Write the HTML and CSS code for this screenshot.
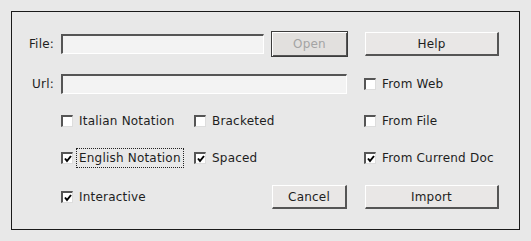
FILE: index.html
```html
<!DOCTYPE html>
<html lang="en">
    <head>
        <meta charset="UTF-8">
        <link rel="stylesheet" href="styles.css">
        <title>Import</title>
    </head>
    <body>
        <div id="dialog">
            <span class="label">File:</span>
            <div class="field" id="file-field"></div>
            <button class="button" id="open" disabled>Open</button>
            <button class="button" id="help">Help</button>

            <span class="label">Url:</span>
            <div class="field" id="url-field"></div>
            <label class="check"><span class="box"></span><span class="text">From Web</span></label>

            <label class="check col2"><span class="box"></span><span class="text">Italian Notation</span></label>
            <label class="check"><span class="box"></span><span class="text">Bracketed</span></label>
            <label class="check col5"><span class="box"></span><span class="text">From File</span></label>

            <label class="check col2"><span class="box checked"><svg viewBox="0 0 8 8"><path d="M1 3.5 L3 6 L7 1" /></svg></span><span class="text focus">English Notation</span></label>
            <label class="check"><span class="box checked"><svg viewBox="0 0 8 8"><path d="M1 3.5 L3 6 L7 1" /></svg></span><span class="text">Spaced</span></label>
            <label class="check col5"><span class="box checked"><svg viewBox="0 0 8 8"><path d="M1 3.5 L3 6 L7 1" /></svg></span><span class="text">From Currend Doc</span></label>

            <label class="check col2"><span class="box checked"><svg viewBox="0 0 8 8"><path d="M1 3.5 L3 6 L7 1" /></svg></span><span class="text">Interactive</span></label>
            <button class="button col4" id="cancel">Cancel</button>
            <button class="button" id="import">Import</button>
        </div>
    </body>
</html>
```
FILE: styles.css
```css
html, body {
    margin: 0;
    background-color: #e8e8e8;
}

body {
    padding: 11px;
    font-family: "DejaVu Sans", sans-serif;
    font-size: 12px;
    letter-spacing: 0.2px;
    color: #1e1e1e;
}

#dialog {
    width: 507px;
    border: 1px solid #1a1a1a;
    box-sizing: content-box;
    display: grid;
    grid-template-columns: 49px 133px 77px 93px 1fr;
    grid-template-rows: 26px 20px 20px 20px 24px;
    row-gap: 17px;
    align-items: center;
    align-content: start;
    padding-top: 19px;
    height: 198px;
}

.label {
    grid-column: 1;
    text-align: right;
    padding-right: 7px;
}

.field {
    height: 20px;
    box-sizing: border-box;
    background-color: #f3f3f3;
    border-top: 2px solid #555;
    border-left: 2px solid #555;
    border-right: 1px solid #fff;
    border-bottom: 1px solid #fff;
}

#file-field {
    grid-column: 2 / 4;
    width: 203px;
}

#url-field {
    grid-column: 2 / 5;
    width: 286px;
}

.button {
    height: 24px;
    box-sizing: border-box;
    font-family: inherit;
    font-size: 12px;
    letter-spacing: 0.2px;
    color: #1e1e1e;
    background-color: #e9e7e6;
    border-top: 1px solid #fff;
    border-left: 1px solid #fff;
    border-right: 2px solid #555;
    border-bottom: 2px solid #555;
    padding: 0;
    justify-self: start;
}

#open {
    grid-column: 4;
    width: 77px;
    height: 26px;
    color: #a4a4a4;
    background-color: #e2e0de;
    border: 1px solid #3c3c3c;
    box-shadow: inset 1px 1px 0 #fff, inset -1px -1px 0 #555;
}

#help, #import {
    grid-column: 5;
    width: 134px;
    margin-left: 1px;
}

#cancel {
    width: 75px;
    margin-left: 1px;
}

.col2 { grid-column: 2; }
.col4 { grid-column: 4; }
.col5 { grid-column: 5; }

.check {
    display: flex;
    align-items: center;
    white-space: nowrap;
}

.box {
    flex-shrink: 0;
    width: 12px;
    height: 12px;
    box-sizing: border-box;
    background-color: #fff;
    border-top: 2px solid #555;
    border-left: 2px solid #555;
    border-right: 1px solid #ddd;
    border-bottom: 1px solid #ddd;
    display: flex;
    align-items: center;
    justify-content: center;
}

.box svg {
    width: 8px;
    height: 8px;
}

.box path {
    fill: none;
    stroke: #000;
    stroke-width: 2;
}

.text {
    margin-left: 3px;
    padding: 2px 2px;
    border: 1px dotted transparent;
}

.text.focus {
    border-color: #222;
}
```
